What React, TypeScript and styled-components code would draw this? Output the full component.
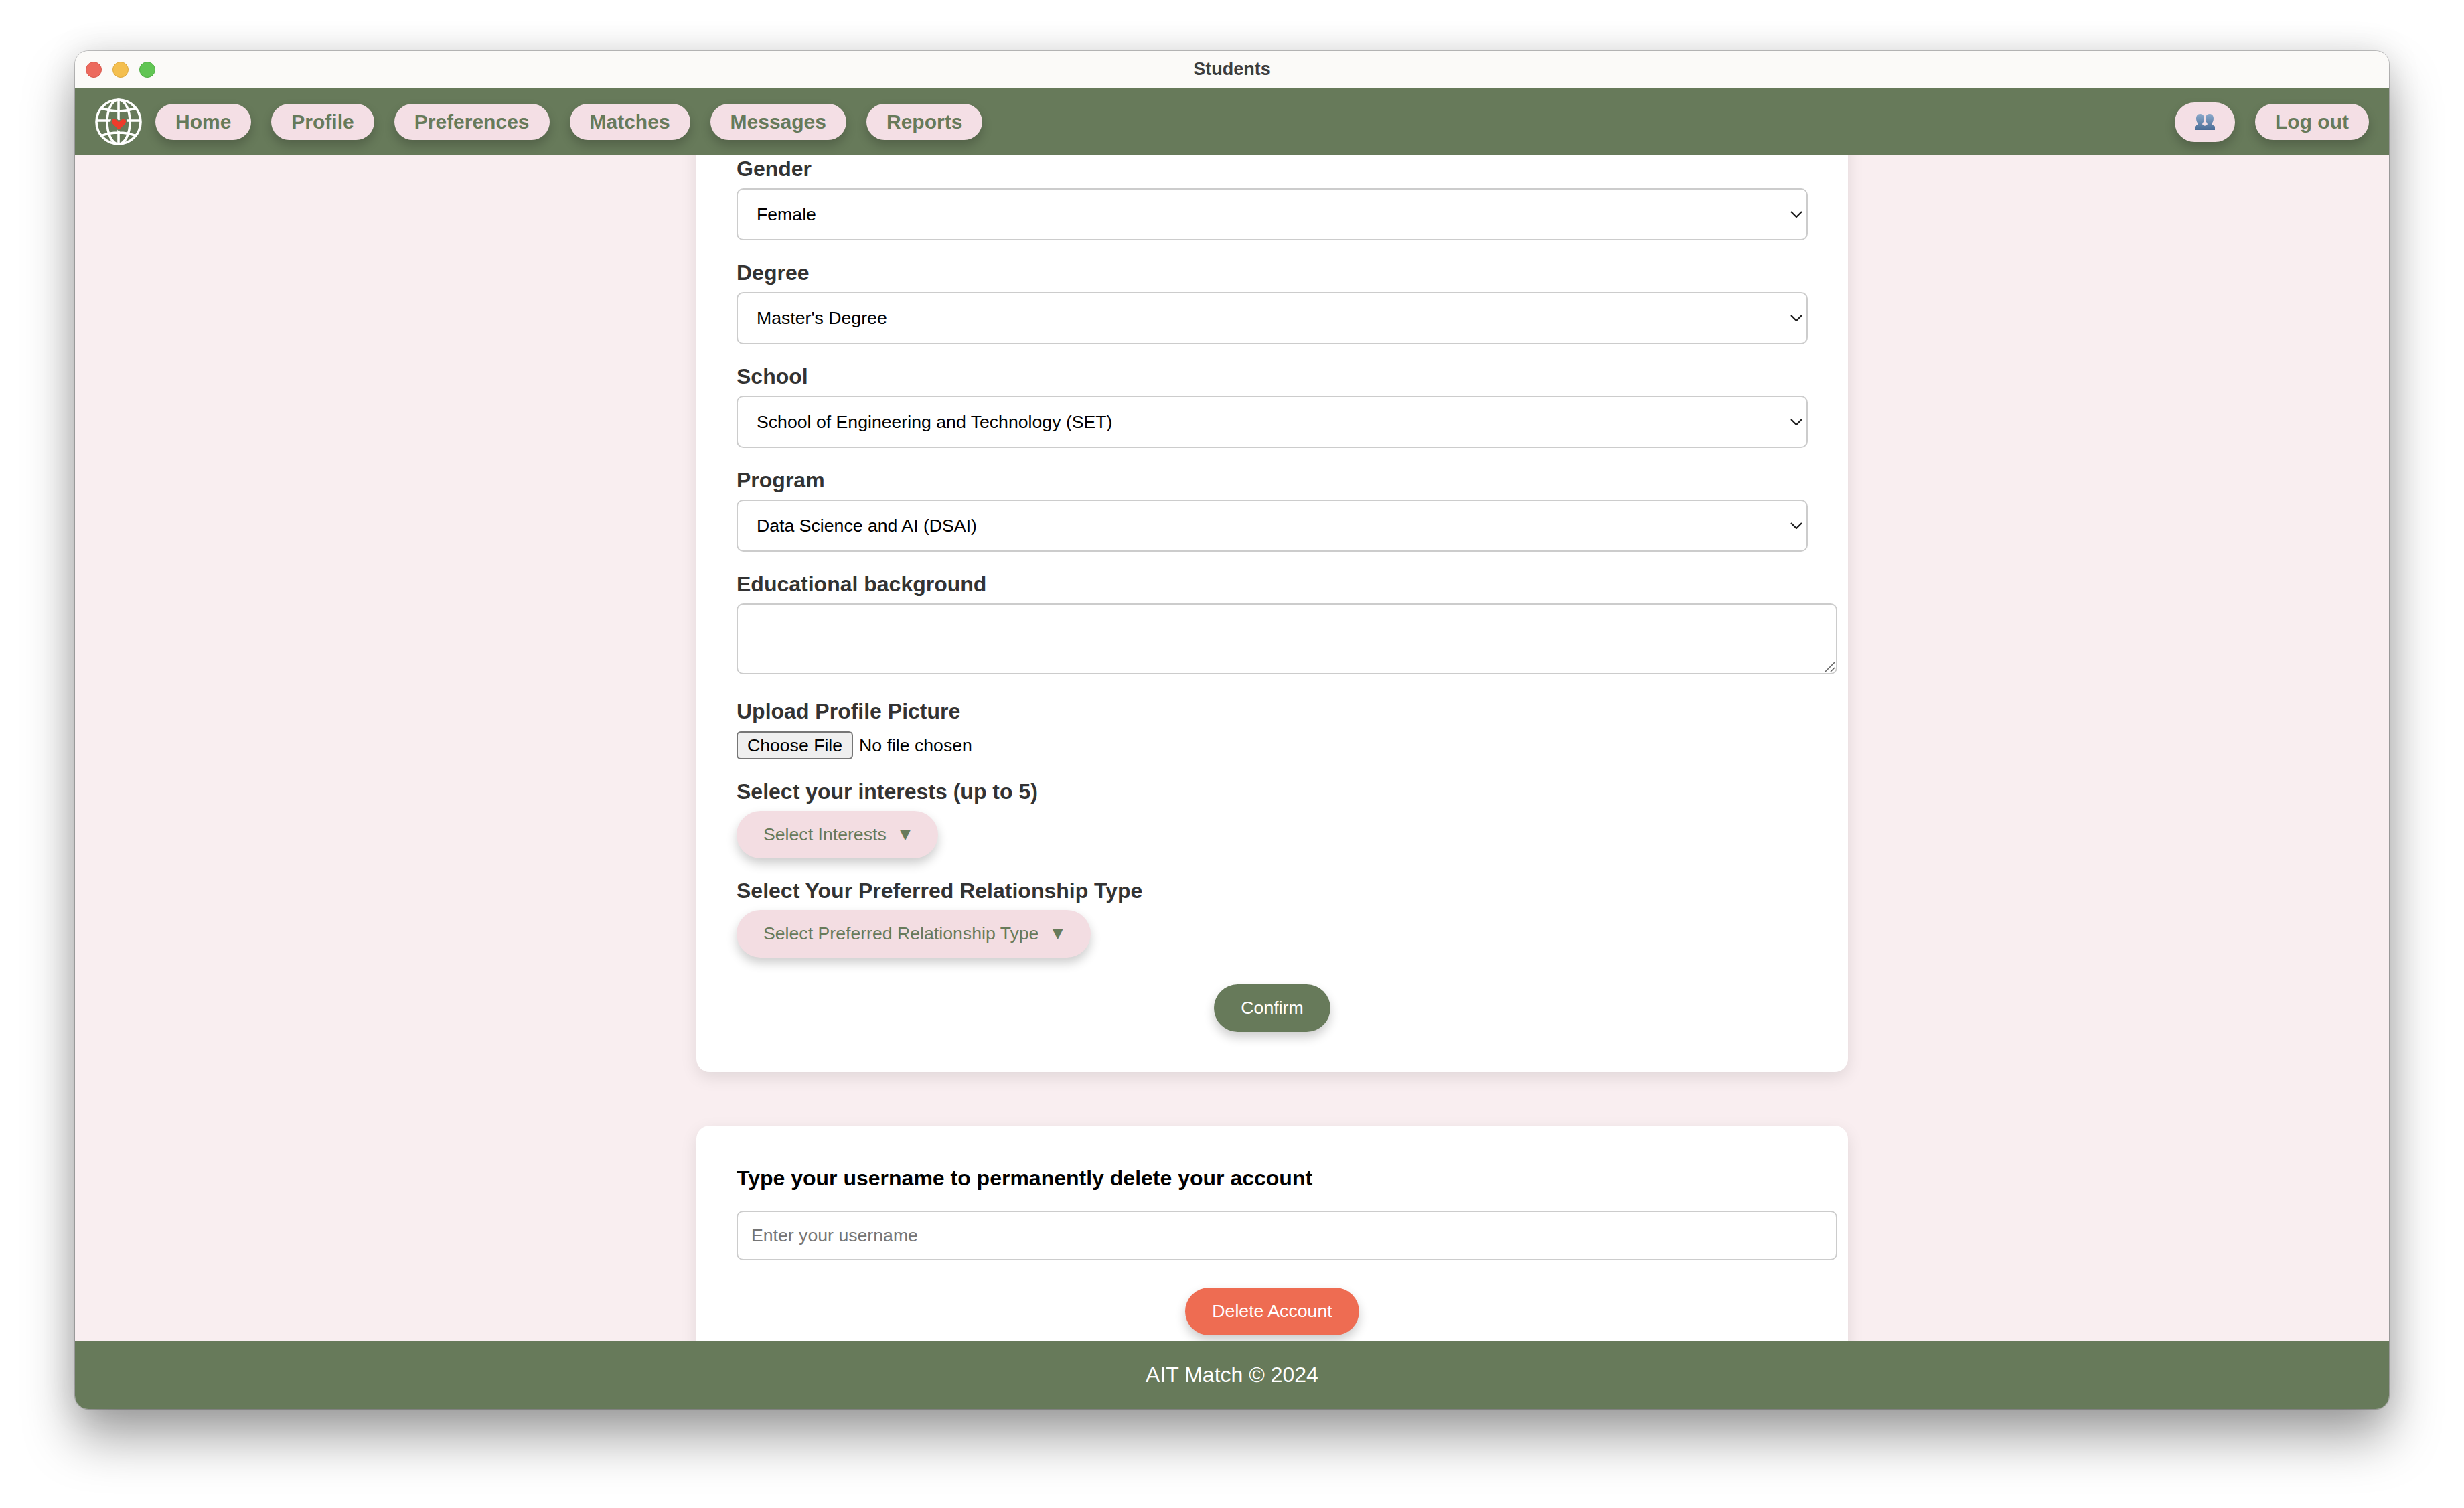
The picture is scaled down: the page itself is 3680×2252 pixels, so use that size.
import React from 'react';
import styled, { createGlobalStyle } from 'styled-components';

const GREEN = '#677a5a';
const PINK = '#f4dfe5';
const FONT = '"Liberation Sans", Arial, sans-serif';

const GlobalStyle = createGlobalStyle`
  html, body {
    margin: 0;
    padding: 0;
    background: #fff;
  }
  * {
    box-sizing: border-box;
  }
`;

const Page = styled.div`
  width: 3680px;
  height: 2252px;
  padding: 76px 112px 148px;
  overflow: hidden;
  font-family: ${FONT};
`;

const Window = styled.div`
  height: 2028px;
  display: flex;
  flex-direction: column;
  border-radius: 20px;
  overflow: hidden;
  box-shadow: 0 0 0 1px rgba(0, 0, 0, 0.22), 0 44px 76px rgba(0, 0, 0, 0.36), 0 0 50px rgba(0, 0, 0, 0.12);
`;

const TitleBar = styled.div`
  flex: none;
  height: 56px;
  padding: 0 16px;
  display: grid;
  grid-template-columns: 1fr auto 1fr;
  align-items: center;
  background: #fbfaf8;
  border-bottom: 1px solid #46572f;
`;

const Lights = styled.div`
  display: flex;
  gap: 16px;
`;

const Light = styled.span<{ $color: string; $edge: string }>`
  width: 24px;
  height: 24px;
  border-radius: 50%;
  background: ${(p) => p.$color};
  border: 1px solid ${(p) => p.$edge};
`;

const WindowTitle = styled.div`
  font-size: 27px;
  font-weight: 700;
  color: #3d3d3d;
`;

const Nav = styled.nav`
  flex: none;
  height: 100px;
  padding: 0 30px;
  display: flex;
  align-items: center;
  background: ${GREEN};
`;

const Logo = styled.svg`
  flex: none;
  width: 70px;
  height: 70px;
  margin-right: 20px;
`;

const NavLinks = styled.div`
  display: flex;
  gap: 30px;
`;

const NavRight = styled.div`
  margin-left: auto;
  display: flex;
  align-items: center;
  gap: 30px;
`;

const NavButton = styled.button`
  height: 54px;
  padding: 0 30px;
  display: flex;
  align-items: center;
  border: 0;
  border-radius: 27px;
  background: ${PINK};
  color: ${GREEN};
  font-family: ${FONT};
  font-size: 30px;
  font-weight: 700;
  box-shadow: 0 8px 16px rgba(0, 0, 0, 0.2);
`;

const IconButton = styled(NavButton)`
  height: 59px;
  border-radius: 30px;
`;

const Main = styled.main`
  flex: 1;
  min-height: 0;
  overflow: hidden;
  padding-left: 928px;
  background: #f9eef0;
`;

const Column = styled.div`
  width: 1720px;
  margin-top: -40px;
`;

const Card = styled.section<{ $top: number }>`
  padding: ${(p) => p.$top}px 60px 60px;
  margin-bottom: 80px;
  background: #fff;
  border-radius: 20px;
  box-shadow: 0 8px 24px rgba(0, 0, 0, 0.1);
`;

const Field = styled.div<{ $after?: number }>`
  display: flex;
  flex-direction: column;
  align-items: flex-start;
  margin-bottom: ${(p) => p.$after ?? 30}px;
`;

const Label = styled.label`
  margin-bottom: 10px;
  font-size: 32px;
  line-height: 37px;
  font-weight: 700;
  color: #333;
`;

const SelectWrap = styled.div`
  position: relative;
  width: 100%;
`;

const Select = styled.select`
  display: block;
  width: 100%;
  height: 78px;
  padding: 0 60px 0 28px;
  appearance: none;
  background: #fff;
  border: 2px solid #ccc;
  border-radius: 10px;
  color: #000;
  font-family: ${FONT};
  font-size: 26.67px;
`;

const Chevron = styled.svg`
  position: absolute;
  top: 34px;
  right: 8px;
  width: 18px;
  height: 10px;
  pointer-events: none;
`;

const TextAreaWrap = styled.div`
  position: relative;
  width: 1644px;
`;

const TextArea = styled.textarea`
  display: block;
  width: 100%;
  height: 106px;
  background: #fff;
  border: 2px solid #ccc;
  border-radius: 10px;
  resize: none;
`;

const ResizeGrip = styled.svg`
  position: absolute;
  right: 3px;
  bottom: 3px;
  width: 16px;
  height: 16px;
`;

const FileRow = styled.div`
  display: flex;
  align-items: center;
  gap: 9px;
  margin-top: 1px;
`;

const FileButton = styled.button`
  width: 174px;
  height: 42px;
  padding: 0;
  background: #efefef;
  border: 2px solid #767676;
  border-radius: 6px;
  color: #000;
  font-family: ${FONT};
  font-size: 26.67px;
`;

const FileStatus = styled.span`
  font-size: 26.67px;
  color: #000;
`;

const PillButton = styled.button<{ $bg: string; $fg: string }>`
  height: 71px;
  padding: 0 40px;
  border: 0;
  border-radius: 36px;
  background: ${(p) => p.$bg};
  color: ${(p) => p.$fg};
  font-family: ${FONT};
  font-size: 26.67px;
  white-space: nowrap;
  box-shadow: 0 8px 16px rgba(0, 0, 0, 0.2);
`;

const Caret = styled.span`
  margin-left: 15px;
  margin-right: -4px;
`;

const Centered = styled.div<{ $top: number }>`
  display: flex;
  justify-content: center;
  margin-top: ${(p) => p.$top}px;
`;

const DeleteTitle = styled.h3`
  margin: 0 0 30px;
  font-size: 32px;
  line-height: 37px;
  font-weight: 700;
  color: #000;
`;

const UserInput = styled.input`
  display: block;
  width: 1644px;
  height: 74px;
  padding: 0 20px;
  border: 2px solid #ccc;
  border-radius: 10px;
  font-family: ${FONT};
  font-size: 26.67px;
  &::placeholder {
    color: #757575;
    opacity: 1;
  }
`;

const Footer = styled.footer`
  flex: none;
  height: 101px;
  display: flex;
  align-items: center;
  justify-content: center;
  background: ${GREEN};
  color: #fff;
  font-size: 32px;
`;

const GlobeLogo = () => (
  <Logo viewBox="0 0 70 70" fill="none" stroke="#fff" strokeWidth="3.6">
    <circle cx="35" cy="35" r="33" />
    <ellipse cx="35" cy="35" rx="17" ry="33" />
    <path d="M35 2V68M2 33H68M8 14Q35 24 62 14M8 56Q35 46 62 56" />
    <path
      d="M35.5 48L25.5 38C22.5 35 24 30 28 30C31.5 30 34 32 35.5 34.5C37 32 39.5 30 43 30C47 30 48.5 35 45.5 38Z"
      fill="#ee3b2b"
      stroke={GREEN}
      strokeWidth="1.6"
    />
  </Logo>
);

const BustsIcon = () => (
  <svg width="30" height="24" viewBox="0 0 30 24">
    <defs>
      <linearGradient id="bust" x1="0" y1="0" x2="0" y2="1">
        <stop offset="0" stopColor="#8aa9cb" />
        <stop offset="1" stopColor="#4a6c96" />
      </linearGradient>
    </defs>
    <path
      d="M8 0C4 0 2 3 2 7C2 10 3.5 13 5 15C5 16.5 1 17 0 19V24H16V19C15 17 11 16.5 11 15C12.5 13 14 10 14 7C14 3 12 0 8 0Z"
      fill="url(#bust)"
    />
    <path
      d="M22 0C18 0 16 3 16 7C16 10 17.5 13 19 15C19 16.5 15 17 14 19V24H30V19C29 17 25 16.5 25 15C26.5 13 28 10 28 7C28 3 26 0 22 0Z"
      fill="url(#bust)"
    />
  </svg>
);

const selects = [
  { label: 'Gender', value: 'Female' },
  { label: 'Degree', value: "Master's Degree" },
  { label: 'School', value: 'School of Engineering and Technology (SET)' },
  { label: 'Program', value: 'Data Science and AI (DSAI)' },
];

const navLinks = ['Home', 'Profile', 'Preferences', 'Matches', 'Messages', 'Reports'];

export default function App() {
  return (
    <Page>
      <GlobalStyle />
      <Window>
        <TitleBar>
          <Lights>
            <Light $color="#ec6a5e" $edge="#d9574c" />
            <Light $color="#f4bf4f" $edge="#dca83e" />
            <Light $color="#61c554" $edge="#4fad43" />
          </Lights>
          <WindowTitle>Students</WindowTitle>
        </TitleBar>
        <Nav>
          <GlobeLogo />
          <NavLinks>
            {navLinks.map((link) => (
              <NavButton key={link}>{link}</NavButton>
            ))}
          </NavLinks>
          <NavRight>
            <IconButton>
              <BustsIcon />
            </IconButton>
            <NavButton>Log out</NavButton>
          </NavRight>
        </Nav>
        <Main>
          <Column>
            <Card $top={42}>
              {selects.map((item) => (
                <Field key={item.label}>
                  <Label>{item.label}</Label>
                  <SelectWrap>
                    <Select defaultValue={item.value}>
                      <option>{item.value}</option>
                    </Select>
                    <Chevron viewBox="0 0 18 10" fill="none" stroke="#1c1c1c" strokeWidth="2.2">
                      <path d="M1 1L9 9L17 1" />
                    </Chevron>
                  </SelectWrap>
                </Field>
              ))}
              <Field $after={37}>
                <Label>Educational background</Label>
                <TextAreaWrap>
                  <TextArea />
                  <ResizeGrip viewBox="0 0 16 16" fill="none" stroke="#666" strokeWidth="1.6">
                    <path d="M1 15L15 1M9 15L15 9" />
                  </ResizeGrip>
                </TextAreaWrap>
              </Field>
              <Field>
                <Label>Upload Profile Picture</Label>
                <FileRow>
                  <FileButton>Choose File</FileButton>
                  <FileStatus>No file chosen</FileStatus>
                </FileRow>
              </Field>
              <Field>
                <Label>Select your interests (up to 5)</Label>
                <PillButton $bg="#f3dde2" $fg={GREEN}>
                  Select Interests<Caret>▼</Caret>
                </PillButton>
              </Field>
              <Field $after={0}>
                <Label>Select Your Preferred Relationship Type</Label>
                <PillButton $bg="#f3dde2" $fg={GREEN}>
                  Select Preferred Relationship Type<Caret>▼</Caret>
                </PillButton>
              </Field>
              <Centered $top={40}>
                <PillButton $bg={GREEN} $fg="#fff">
                  Confirm
                </PillButton>
              </Centered>
            </Card>
            <Card $top={60}>
              <DeleteTitle>Type your username to permanently delete your account</DeleteTitle>
              <UserInput placeholder="Enter your username" />
              <Centered $top={41}>
                <PillButton $bg="#ee6c52" $fg="#fff">
                  Delete Account
                </PillButton>
              </Centered>
            </Card>
          </Column>
        </Main>
        <Footer>AIT Match © 2024</Footer>
      </Window>
    </Page>
  );
}
